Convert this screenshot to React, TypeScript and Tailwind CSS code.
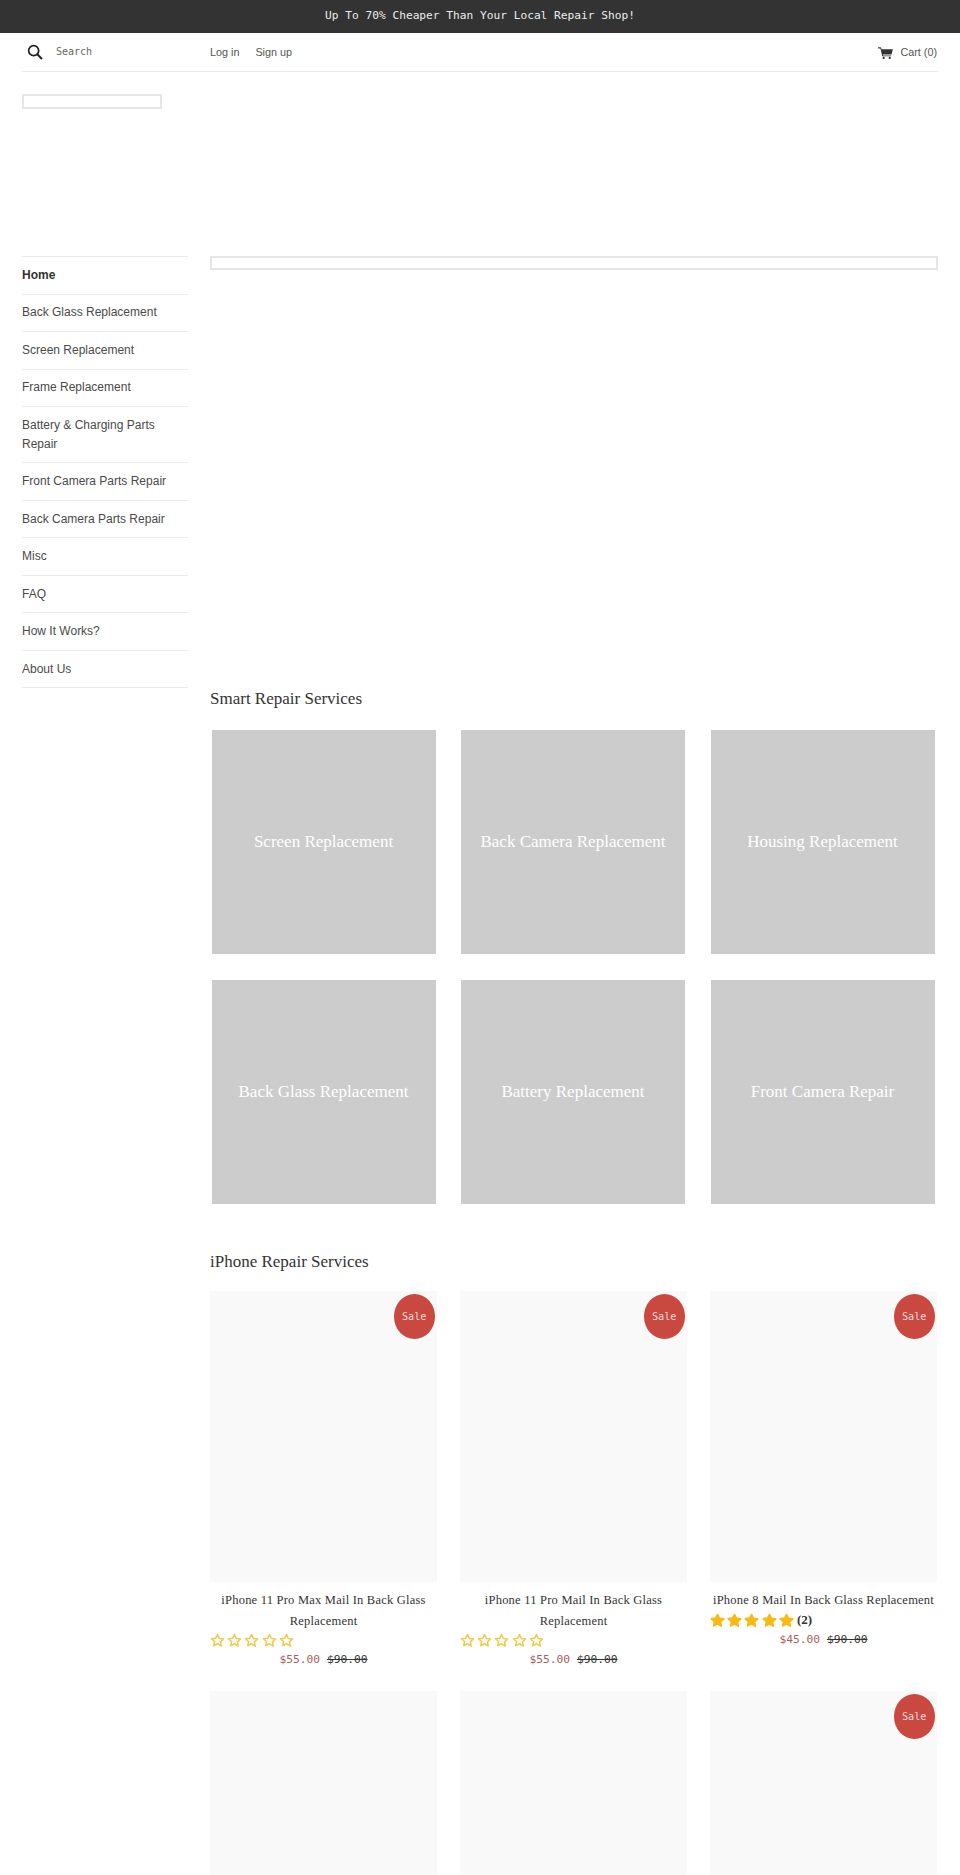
import React from "react";

const nav = [
  "Home",
  "Back Glass Replacement",
  "Screen Replacement",
  "Frame Replacement",
  "Battery & Charging Parts Repair",
  "Front Camera Parts Repair",
  "Back Camera Parts Repair",
  "Misc",
  "FAQ",
  "How It Works?",
  "About Us",
];

const tiles = [
  "Screen Replacement",
  "Back Camera Replacement",
  "Housing Replacement",
  "Back Glass Replacement",
  "Battery Replacement",
  "Front Camera Repair",
];

const STAR = "M12 2.6l2.9 6.2 6.8.8-5 4.6 1.3 6.7L12 17.1l-6 3.3 1.3-6.7-5-4.6 6.8-.8z";

function Stars({ filled, count }: { filled?: boolean; count?: number }) {
  return (
    <div className="flex items-center h-[19px]">
      {[0, 1, 2, 3, 4].map((i) => (
        <svg key={i} viewBox="0 0 24 24" className="w-[15px] h-[15px] mr-[2.2px] overflow-visible">
          <path
            d={STAR}
            fill={filled ? "#fbb914" : "none"}
            stroke={filled ? "#fbb914" : "#f2c94c"}
            strokeWidth={filled ? 3 : 2.4}
            strokeLinejoin="round"
          />
        </svg>
      ))}
      {count !== undefined && (
        <span className="ml-[1px] font-['Liberation_Serif',serif] font-bold text-[13px] text-[#333]">({count})</span>
      )}
    </div>
  );
}

function Sale() {
  return (
    <div className="absolute top-[3px] right-[2px] w-[41.5px] h-[45px] rounded-[50%] bg-[#c9483f] flex items-center justify-center pt-[1px] text-[#f5dcd9] text-[10.2px] font-['DejaVu_Sans_Mono',monospace]">
      Sale
    </div>
  );
}

function Product({
  title,
  price,
  sale,
  filled,
  count,
  bare,
}: {
  title?: string;
  price?: string;
  sale?: boolean;
  filled?: boolean;
  count?: number;
  bare?: boolean;
}) {
  return (
    <div>
      <div className="relative h-[291px] bg-[#f9f9f9]">{sale && <Sale />}</div>
      {!bare && (
        <div className="pt-[8px]">
          <div className="text-center font-['Liberation_Serif',serif] text-[12.5px] tracking-[0.22px] leading-[20.5px] text-[#333]">
            {title}
          </div>
          <Stars filled={filled} count={count} />
          <div className="text-center font-['DejaVu_Sans_Mono',monospace] text-[11.25px] leading-[20px]">
            <span className="text-[#a9605c]">{price}</span>{" "}
            <span className="text-[#333] line-through">$90.00</span>
          </div>
        </div>
      )}
    </div>
  );
}

export default function App() {
  return (
    <div className="h-[1875px] overflow-hidden bg-white text-[#333] font-['Liberation_Sans',sans-serif]">
      <div className="h-[33px] bg-[#333] flex items-center justify-center text-[#ececec] text-[11.2px] font-['DejaVu_Sans_Mono',monospace]">
        Up To 70% Cheaper Than Your Local Repair Shop!
      </div>

      <div className="mx-[22px]">
        <header className="h-[39px] border-b border-[#ebebeb] flex items-center text-[10.8px] text-[#555]">
          <div className="w-[188px] flex items-center">
            <svg viewBox="0 0 24 24" className="ml-[5px] w-[16px] h-[16px] text-[#222]" fill="none" stroke="currentColor">
              <circle cx="10" cy="10" r="7.5" strokeWidth="2.6" />
              <path d="M15.4 15.4L22.5 22.5" strokeWidth="3" />
            </svg>
            <span className="ml-[13px] -mt-[2px] font-['DejaVu_Sans_Mono',monospace] text-[10px] text-[#666]">Search</span>
          </div>
          <a className="pt-[1px]">Log in</a>
          <a className="ml-[16px] pt-[1px]">Sign up</a>
          <div className="ml-auto flex items-center pt-[1px] pr-[1px]">
            <svg viewBox="0 0 16 13" className="w-[15px] h-[12px] text-[#333]" fill="currentColor">
              <path d="M0 .4h2.3c.6 0 1 .3 1.2.9L3.8 2.4H16l-1.5 5.7H5.2l.2 1h8.7v1H4.5L2.5 1.5H0z" />
              <circle cx="6" cy="11.8" r="1.2" />
              <circle cx="12.6" cy="11.8" r="1.2" />
            </svg>
            <span className="ml-[7px]">Cart (0)</span>
          </div>
        </header>

        <div className="mt-[22px] w-[140px] h-[14.5px] border-2 border-[#e6e6e6]" />

        <div className="mt-[147.5px] flex items-start">
          <nav className="w-[166px] border-t border-[#ebebeb] text-[12px] text-[#4a4a4a]">
            {nav.map((n, i) => (
              <div
                key={n}
                className={
                  "border-b border-[#ebebeb] py-[8.875px] leading-[18.75px] " +
                  (i === 0 ? "font-bold text-[#333]" : "")
                }
              >
                {n}
              </div>
            ))}
          </nav>

          <main className="ml-[22px] flex-1 min-w-0">
            <div className="h-[14px] border-2 border-[#e6e6e6]" />

            <h2 className="mt-[417px] font-['Liberation_Serif',serif] font-normal text-[17px] leading-[24px] text-[#333]">
              Smart Repair Services
            </h2>
            <div className="mt-[19px] ml-[1.5px] grid grid-cols-[repeat(3,224px)] gap-x-[25.5px] gap-y-[25.5px]">
              {tiles.map((t) => (
                <div
                  key={t}
                  className="h-[224px] bg-[#ccc] flex items-center justify-center text-white font-['Liberation_Serif',serif] text-[17px]"
                >
                  {t}
                </div>
              ))}
            </div>

            <h2 className="mt-[46.5px] font-['Liberation_Serif',serif] font-normal text-[17px] leading-[24px] text-[#333]">
              iPhone Repair Services
            </h2>
            <div className="mt-[17px] grid grid-cols-[repeat(3,227px)] gap-x-[23px] gap-y-[0px]">
              <div className="h-[400px]">
                <Product sale title="iPhone 11 Pro Max Mail In Back Glass Replacement" price="$55.00" />
              </div>
              <div className="h-[400px]">
                <Product sale title="iPhone 11 Pro Mail In Back Glass Replacement" price="$55.00" />
              </div>
              <div className="h-[400px]">
                <Product sale filled count={2} title="iPhone 8 Mail In Back Glass Replacement" price="$45.00" />
              </div>
              <Product bare />
              <Product bare />
              <Product bare sale />
            </div>
          </main>
        </div>
      </div>
    </div>
  );
}
